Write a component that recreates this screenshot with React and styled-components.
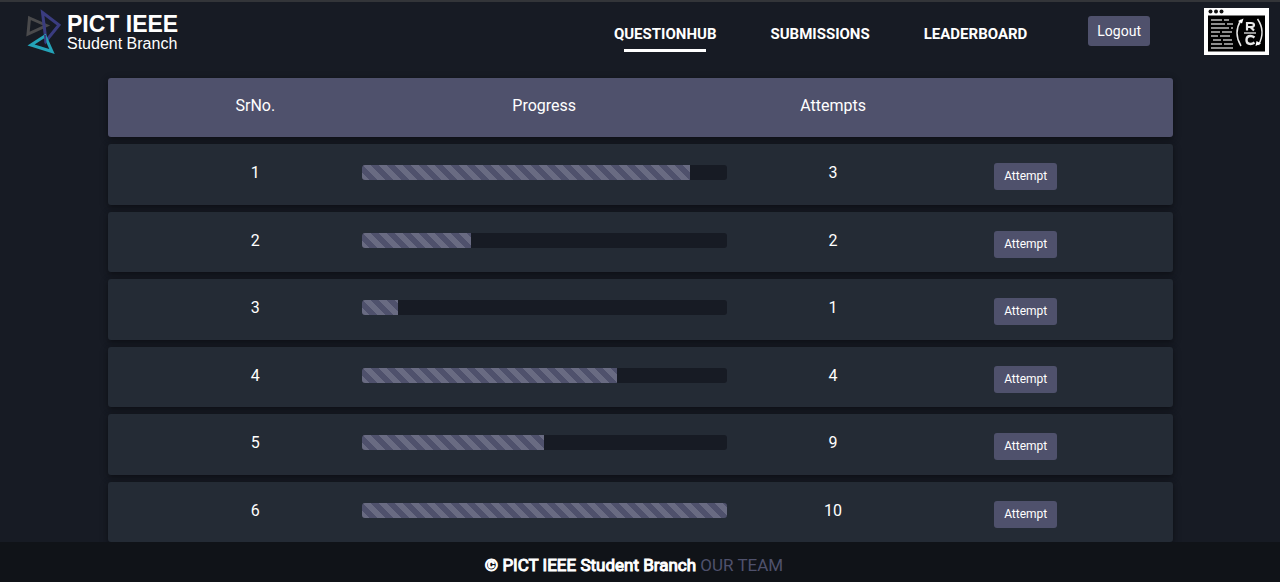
import React from 'react';
import styled, { createGlobalStyle } from 'styled-components';

const GlobalStyle = createGlobalStyle`
  *, *::before, *::after { box-sizing: border-box; }
  body {
    margin: 0;
    background: #171b24;
    color: #fff;
    font-family: Roboto, "Liberation Sans", sans-serif;
    font-size: 16px;
    line-height: 20px;
  }
`;

const Page = styled.div`
  display: flex;
  flex-direction: column;
  min-height: 100vh;
`;

const Header = styled.header`
  display: flex;
  align-items: flex-start;
  padding: 6px 11px 0 24px;
  border-top: 2px solid #333539;
`;

const Brand = styled.a`
  display: flex;
  gap: 4px;
  margin-right: auto;
  color: #fff;
  text-decoration: none;
  font-family: "Liberation Sans", Arial, sans-serif;
`;

const BrandText = styled.span`
  display: flex;
  flex-direction: column;
  padding-top: 5px;
  font-size: 16px;
  line-height: 16px;
  white-space: nowrap;
`;

const BrandName = styled.strong`
  font-size: 23px;
  line-height: 23px;
`;

const Nav = styled.nav`
  display: flex;
  gap: 54px;
  padding-top: 16px;
`;

const NavLink = styled.a`
  display: flex;
  flex-direction: column;
  align-items: center;
  gap: 5px;
  color: #fff;
  font-size: 15px;
  font-weight: 700;
  text-decoration: none;

  &::after {
    content: "";
    width: 80%;
    height: 3px;
    background: ${({ $active }) => ($active ? '#fff' : 'transparent')};
  }
`;

const Button = styled.button`
  border: 0;
  border-radius: 3px;
  background: #4f516c;
  color: #fff;
  font-family: inherit;
  cursor: pointer;
`;

const LogoutButton = styled(Button)`
  margin: 8px 54px 0 61px;
  padding: 5px 9px;
  font-size: 14px;
  line-height: 20px;
`;

const AttemptButton = styled(Button)`
  padding: 4px 10px;
  font-size: 12px;
  line-height: 19px;
`;

const Main = styled.main`
  display: flex;
  flex: 1;
  padding: 22px 107px 0 108px;
`;

const Table = styled.table`
  display: flex;
  flex-direction: column;
  flex: 1;
  gap: 7px;
`;

const TableHead = styled.thead`
  display: block;
`;

const TableBody = styled.tbody`
  display: grid;
  flex: 1;
  grid-auto-rows: 1fr;
  gap: 7px;
`;

const Row = styled.tr`
  display: grid;
  grid-template-columns: 2fr 4fr 2fr 2fr;
  align-items: start;
  padding: ${({ $head }) => ($head ? '18px 51px 21px' : '19px 51px 13px')};
  border-radius: 3px;
  background: ${({ $head }) => ($head ? '#4f516c' : '#242b35')};
  box-shadow: 0 2px 5px rgba(0, 0, 0, 0.25), 0 2px 10px rgba(0, 0, 0, 0.2);
`;

const HeadCell = styled.th`
  padding: 0;
  font-weight: 400;
`;

const Cell = styled.td`
  padding: 0;
  text-align: center;
`;

const ProgressCell = styled(Cell)`
  padding: 2px 10px 0;
`;

const ActionCell = styled(Cell)`
  display: flex;
  justify-content: center;
`;

const Track = styled.div`
  height: 15px;
  overflow: hidden;
  border-radius: 3px;
  background: #171b24;
`;

const Fill = styled.div`
  height: 100%;
  background-color: #4f516c;
  background-image: linear-gradient(
    45deg,
    rgba(255, 255, 255, 0.15) 25%,
    transparent 25%,
    transparent 50%,
    rgba(255, 255, 255, 0.15) 50%,
    rgba(255, 255, 255, 0.15) 75%,
    transparent 75%
  );
  background-size: 16px 16px;
`;

const Footer = styled.footer`
  position: relative;
  padding: 13px 12px 7px 0;
  background: #101318;
  font-size: 17px;
  text-align: center;
`;

const Copyright = styled.span`
  -webkit-text-stroke: 1px #fff;
`;

const FooterLink = styled.a`
  color: #4f516c;
  text-decoration: none;
`;

const questions = [
  { id: 1, progress: 90, attempts: 3 },
  { id: 2, progress: 30, attempts: 2 },
  { id: 3, progress: 10, attempts: 1 },
  { id: 4, progress: 70, attempts: 4 },
  { id: 5, progress: 50, attempts: 9 },
  { id: 6, progress: 100, attempts: 10 },
];

function BrandMark() {
  return (
    <svg width="39" height="48" viewBox="24 8 39 48" fill="none" strokeWidth="3" aria-hidden="true">
      <path d="M29.5 18 46.5 25.5 28 34Z" stroke="#4a4a4c" />
      <path d="M42.5 12.5 59 25 46 41Z" stroke="#3a3c80" />
      <path d="M31 45 45 36 52 51.500Z" stroke="#24a3b8" />
      <path d="M45 35 45.500 43" stroke="#3a3c80" strokeWidth="2" />
    </svg>
  );
}

function ClubLogo() {
  return (
    <svg width="65" height="47" viewBox="0 0 65 47" fill="none" role="img" aria-label="Club logo">
      <path fill="#fff" d="M0 0h65v47H0z" />
      <g fill="#111">
        <circle cx="6.500" cy="3.500" r="2" />
        <circle cx="12" cy="3.500" r="2" />
        <circle cx="17.500" cy="3.500" r="2" />
      </g>
      <path fill="#000" d="M4 7.500h57v36H4z" />
      <path
        stroke="#bcbcbc"
        strokeWidth="1.600"
        d="M7 12h11m2 0h5M7 16h14m2 0h6M7 20h18m2 0h2M7 24h9m2 0h10M7 28h7m2 0h10M9 32h8m2 0h9M7 36h11m2 0h9M7 40h22"
      />
      <g stroke="#e6e6e6">
        <path strokeWidth="1.500" d="M37 12Q29 25 37 38M53.500 11Q62 23 54.500 37" />
        <path strokeWidth="2.200" d="M43 22.500V15h4q3 0 3 2t-3 2h-4m3.500 0 3.500 3.500" />
        <path strokeWidth="1.300" d="M40 25h12" />
        <path strokeWidth="2.400" d="M50.500 29.500q-2-1.500-4-1.500-4 0-4 4t4 4q2 0 4-1.500" />
      </g>
      <path fill="#fff" d="M39.500 10.500 38 15.500 34 13ZM51.500 38l1-5 4.500 2.500Z" />
    </svg>
  );
}

export default function App() {
  return (
    <Page>
      <GlobalStyle />
      <Header>
        <Brand href="#home">
          <BrandMark />
          <BrandText>
            <BrandName>PICT IEEE</BrandName>
            <span>Student Branch</span>
          </BrandText>
        </Brand>
        <Nav>
          <NavLink href="#questionhub" $active aria-current="page">QUESTIONHUB</NavLink>
          <NavLink href="#submissions">SUBMISSIONS</NavLink>
          <NavLink href="#leaderboard">LEADERBOARD</NavLink>
        </Nav>
        <LogoutButton type="button">Logout</LogoutButton>
        <ClubLogo />
      </Header>
      <Main>
        <Table>
          <TableHead>
            <Row $head>
              <HeadCell scope="col">SrNo.</HeadCell>
              <HeadCell scope="col">Progress</HeadCell>
              <HeadCell scope="col">Attempts</HeadCell>
              <HeadCell />
            </Row>
          </TableHead>
          <TableBody>
            {questions.map(({ id, progress, attempts }) => (
              <Row key={id}>
                <Cell>{id}</Cell>
                <ProgressCell>
                  <Track
                    role="progressbar"
                    aria-label={`Question ${id}`}
                    aria-valuenow={progress}
                    aria-valuemin={0}
                    aria-valuemax={100}
                  >
                    <Fill style={{ width: `${progress}%` }} />
                  </Track>
                </ProgressCell>
                <Cell>{attempts}</Cell>
                <ActionCell>
                  <AttemptButton type="button">Attempt</AttemptButton>
                </ActionCell>
              </Row>
            ))}
          </TableBody>
        </Table>
      </Main>
      <Footer>
        <Copyright>© PICT IEEE Student Branch</Copyright> <FooterLink href="#team">OUR TEAM</FooterLink>
      </Footer>
    </Page>
  );
}
